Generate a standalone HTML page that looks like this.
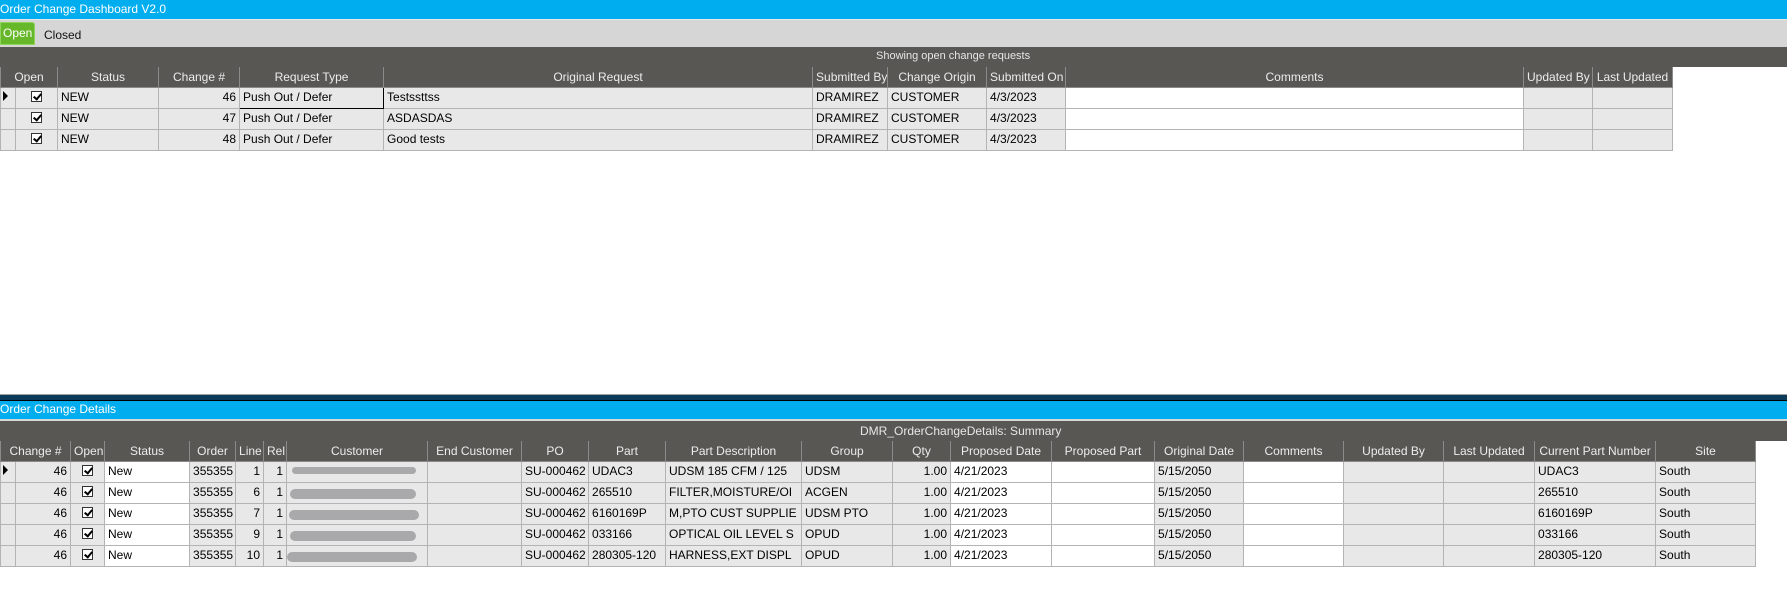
<!DOCTYPE html>
<html><head><meta charset="utf-8"><style>
*{margin:0;padding:0;box-sizing:border-box}
body{width:1787px;height:602px;background:#fff;font-family:"Liberation Sans",Arial,sans-serif;font-size:12px;position:relative;overflow:hidden;color:#000}
.abs{position:absolute}
table{border-collapse:collapse;table-layout:fixed;position:absolute;left:0}
td,th{border:1px solid #b4b4b4;height:21px;white-space:nowrap;overflow:hidden;padding:0 3px;font-weight:normal}
th{background:#595754;color:#ececec;border-color:#8a8a8a;height:20px;text-align:center;border-top:none}
td{background:#e8e8e8;vertical-align:top;padding-top:2px}
td.w{background:#fff}
td.r{text-align:right}
td.c{text-align:center}
.cb{display:inline-block;width:11px;height:11px;border:1px solid #333;background:#fff;position:relative;margin-top:3px}
.cb:after{content:"";position:absolute;left:3px;top:0px;width:3px;height:6px;border:solid #000;border-width:0 2px 2px 0;transform:rotate(40deg)}
.tri{display:inline-block;width:0;height:0;border-left:5px solid #000;border-top:5px solid transparent;border-bottom:5px solid transparent;margin-top:3px}
.blob{position:absolute;height:9px;background:#a9a9ab;border-radius:5px}
</style></head><body>
<div class="abs" style="left:0;top:0;width:1787px;height:19px;background:#00adef;color:#fff;line-height:18px;font-size:12px">Order Change Dashboard V2.0</div>
<div class="abs" style="left:0;top:19px;width:1787px;height:28px;background:#d6d6d6;border-top:1px solid #e8e8e8"></div>
<div class="abs" style="left:0;top:22px;width:35px;height:23px;background:#66b82a;border:1px solid #8fd35a;border-radius:0 3px 0 0;color:#fff;line-height:20px;padding-left:2px">Open</div>
<div class="abs" style="left:44px;top:28px;color:#111">Closed</div>
<div class="abs" style="left:0;top:47px;width:1787px;height:20px;background:#595754"></div>
<div class="abs" style="left:876px;top:50px;color:#e6e6e6;font-size:11px">Showing open change requests</div>

<table style="top:67px;width:1672px">
<colgroup><col style="width:15px"><col style="width:42px"><col style="width:101px"><col style="width:81px"><col style="width:144px"><col style="width:429px"><col style="width:75px"><col style="width:99px"><col style="width:79px"><col style="width:458px"><col style="width:69px"><col style="width:80px"></colgroup>
<tr><th colspan="2">Open</th><th>Status</th><th>Change #</th><th>Request Type</th><th>Original Request</th><th>Submitted By</th><th>Change Origin</th><th>Submitted On</th><th>Comments</th><th>Updated By</th><th>Last Updated</th></tr>
<tr><td style="padding:0 0 0 2px"><span class="tri"></span></td><td class="c" style="padding-top:0"><span class="cb"></span></td><td>NEW</td><td class="r">46</td><td style="border:1px solid #000">Push Out / Defer</td><td>Testssttss</td><td>DRAMIREZ</td><td>CUSTOMER</td><td>4/3/2023</td><td class="w"></td><td></td><td></td></tr>
<tr><td></td><td class="c" style="padding-top:0"><span class="cb"></span></td><td>NEW</td><td class="r">47</td><td>Push Out / Defer</td><td>ASDASDAS</td><td>DRAMIREZ</td><td>CUSTOMER</td><td>4/3/2023</td><td class="w"></td><td></td><td></td></tr>
<tr><td></td><td class="c" style="padding-top:0"><span class="cb"></span></td><td>NEW</td><td class="r">48</td><td>Push Out / Defer</td><td>Good tests</td><td>DRAMIREZ</td><td>CUSTOMER</td><td>4/3/2023</td><td class="w"></td><td></td><td></td></tr>
</table>

<div class="abs" style="left:0;top:394px;width:1787px;height:1px;background:#a0a0a0"></div>
<div class="abs" style="left:0;top:395px;width:1787px;height:6px;background:#0b3a5a;border-bottom:1px solid #000"></div>
<div class="abs" style="left:0;top:401px;width:1787px;height:18px;background:#00adef;color:#fff;line-height:17px">Order Change Details</div>
<div class="abs" style="left:0;top:419px;width:1787px;height:2px;background:#d8d8d8"></div>
<div class="abs" style="left:0;top:421px;width:1787px;height:20px;background:#595754"></div>
<div class="abs" style="left:860px;top:424px;color:#e6e6e6;font-size:12px">DMR_OrderChangeDetails: Summary</div>

<table style="top:441px;width:1755px">
<colgroup><col style="width:15px"><col style="width:55px"><col style="width:34px"><col style="width:85px"><col style="width:46px"><col style="width:28px"><col style="width:23px"><col style="width:141px"><col style="width:94px"><col style="width:67px"><col style="width:77px"><col style="width:136px"><col style="width:91px"><col style="width:58px"><col style="width:101px"><col style="width:103px"><col style="width:89px"><col style="width:100px"><col style="width:100px"><col style="width:91px"><col style="width:121px"><col style="width:100px"></colgroup>
<tr><th colspan="2">Change #</th><th>Open</th><th>Status</th><th>Order</th><th>Line</th><th>Rel</th><th>Customer</th><th>End Customer</th><th>PO</th><th>Part</th><th>Part Description</th><th>Group</th><th>Qty</th><th>Proposed Date</th><th>Proposed Part</th><th>Original Date</th><th>Comments</th><th>Updated By</th><th>Last Updated</th><th>Current Part Number</th><th>Site</th></tr>
<tr><td style="padding:0 0 0 2px"><span class="tri"></span></td><td class="r">46</td><td class="c" style="padding-top:0"><span class="cb"></span></td><td class="w">New</td><td>355355</td><td class="r">1</td><td class="r">1</td><td></td><td></td><td>SU-000462</td><td>UDAC3</td><td>UDSM 185 CFM / 125</td><td>UDSM</td><td class="r">1.00</td><td class="w">4/21/2023</td><td class="w"></td><td>5/15/2050</td><td class="w"></td><td></td><td></td><td>UDAC3</td><td>South</td></tr>
<tr><td></td><td class="r">46</td><td class="c" style="padding-top:0"><span class="cb"></span></td><td class="w">New</td><td>355355</td><td class="r">6</td><td class="r">1</td><td></td><td></td><td>SU-000462</td><td>265510</td><td>FILTER,MOISTURE/OI</td><td>ACGEN</td><td class="r">1.00</td><td class="w">4/21/2023</td><td class="w"></td><td>5/15/2050</td><td class="w"></td><td></td><td></td><td>265510</td><td>South</td></tr>
<tr><td></td><td class="r">46</td><td class="c" style="padding-top:0"><span class="cb"></span></td><td class="w">New</td><td>355355</td><td class="r">7</td><td class="r">1</td><td></td><td></td><td>SU-000462</td><td>6160169P</td><td>M,PTO CUST SUPPLIE</td><td>UDSM PTO</td><td class="r">1.00</td><td class="w">4/21/2023</td><td class="w"></td><td>5/15/2050</td><td class="w"></td><td></td><td></td><td>6160169P</td><td>South</td></tr>
<tr><td></td><td class="r">46</td><td class="c" style="padding-top:0"><span class="cb"></span></td><td class="w">New</td><td>355355</td><td class="r">9</td><td class="r">1</td><td></td><td></td><td>SU-000462</td><td>033166</td><td>OPTICAL OIL LEVEL S</td><td>OPUD</td><td class="r">1.00</td><td class="w">4/21/2023</td><td class="w"></td><td>5/15/2050</td><td class="w"></td><td></td><td></td><td>033166</td><td>South</td></tr>
<tr><td></td><td class="r">46</td><td class="c" style="padding-top:0"><span class="cb"></span></td><td class="w">New</td><td>355355</td><td class="r">10</td><td class="r">1</td><td></td><td></td><td>SU-000462</td><td>280305-120</td><td>HARNESS,EXT DISPL</td><td>OPUD</td><td class="r">1.00</td><td class="w">4/21/2023</td><td class="w"></td><td>5/15/2050</td><td class="w"></td><td></td><td></td><td>280305-120</td><td>South</td></tr>
</table>
<div class="blob" style="left:292px;top:467px;width:124px;height:7px"></div>
<div class="blob" style="left:290px;top:489px;width:126px;height:10px"></div>
<div class="blob" style="left:289px;top:510px;width:130px;height:10px"></div>
<div class="blob" style="left:290px;top:531px;width:126px;height:10px"></div>
<div class="blob" style="left:287px;top:552px;width:130px;height:10px"></div>
</body></html>
